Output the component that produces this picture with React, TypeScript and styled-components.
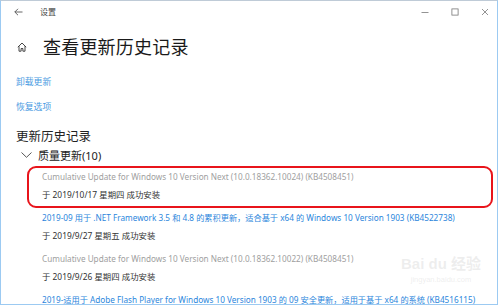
import React from "react";
import styled, { createGlobalStyle } from "styled-components";

const Global = createGlobalStyle`
  html, body { margin: 0; padding: 0; background: #fff; }
  body { width: 500px; height: 307px; overflow: hidden; }
  * { box-sizing: border-box; }
`;

const FONT = `"Noto Sans", "Noto Sans CJK SC", sans-serif`;

const Window = styled.div`
  width: 498px;
  height: 305px;
  border: 1px solid #9ccaf2;
  border-top-color: #bfcbd7;
  overflow: hidden;
  position: relative;
  font-family: ${FONT};
  color: #222;
  background: #fff;
`;

const TitleBar = styled.div`
  height: 21px;
  display: flex;
  align-items: center;
  padding-left: 11px;
`;

const BackButton = styled.div`
  width: 12px;
  height: 12px;
  display: flex;
  align-items: center;
  justify-content: center;
`;

const TitleText = styled.span`
  margin-left: 16px;
  font-size: 8px;
  color: #444;
  line-height: 1;
`;

const Controls = styled.div`
  margin-left: auto;
  display: flex;
  align-items: center;
  gap: 6px;
  height: 100%;
`;

const ControlButton = styled.div`
  width: 24px;
  height: 100%;
  display: flex;
  align-items: center;
  justify-content: center;
`;

const Header = styled.div`
  margin-top: 11px;
  height: 28px;
  display: flex;
  align-items: center;
  padding-left: 16px;
`;

const Heading = styled.h1`
  margin: 0 0 0 16px;
  font-size: 18px;
  font-weight: 400;
  line-height: 28px;
  color: #1a1a1a;
  letter-spacing: 0.2px;
`;

const Link = styled.div<{ $top: number }>`
  margin-top: ${(p) => p.$top}px;
  padding-left: 15px;
  font-size: 8.8px;
  line-height: 14px;
  color: #4a9be2;
`;

const SectionTitle = styled.div`
  margin-top: 14px;
  padding-left: 15px;
  font-size: 12.5px;
  line-height: 18px;
  color: #222;
`;

const Group = styled.div`
  margin-top: 2px;
  display: flex;
  align-items: center;
  padding-left: 20px;
  height: 14px;
  font-size: 11px;
  color: #222;
`;

const GroupLabel = styled.span`
  margin-left: 6px;
`;

const List = styled.div`
  margin-top: 8px;
  padding-left: 41px;
  display: flex;
  flex-direction: column;
  gap: 9px;
`;

const Entry = styled.div<{ $highlight?: boolean }>`
  position: relative;
  display: flex;
  flex-direction: column;
  gap: 4px;
  white-space: nowrap;
  ${(p) =>
    p.$highlight
      ? `&::after {
    content: "";
    position: absolute;
    left: -15px;
    top: -4px;
    width: 462px;
    height: 38px;
    border: 2.8px solid #e8141b;
    border-radius: 9px;
    pointer-events: none;
  }`
      : ""}
`;

const EntryTitle = styled.div<{ $link?: boolean }>`
  font-size: 8.2px;
  line-height: 14px;
  color: ${(p) => (p.$link ? "#2b86dc" : "#a0a0a0")};
`;

const EntryDate = styled.div`
  font-size: 8.4px;
  line-height: 14px;
  color: #333;
`;

const Watermark = styled.div`
  position: absolute;
  left: 400px;
  top: 252px;
  display: flex;
  flex-direction: column;
  align-items: center;
  white-space: nowrap;
  color: rgba(205, 205, 205, 0.35);
  font-family: "Liberation Sans", "Noto Sans CJK SC", sans-serif;
  pointer-events: none;
`;

const WatermarkMain = styled.div`
  font-size: 15px;
  font-weight: 700;
  line-height: 22px;
`;

const WatermarkSub = styled.div`
  font-size: 7.5px;
  line-height: 10px;
`;

const entries = [
  {
    title:
      "Cumulative Update for Windows 10 Version Next (10.0.18362.10024) (KB4508451)",
    date: "于 2019/10/17 星期四 成功安装",
    link: false,
    highlight: true,
  },
  {
    title:
      "2019-09 用于 .NET Framework 3.5 和 4.8 的累积更新，适合基于 x64 的 Windows 10 Version 1903 (KB4522738)",
    date: "于 2019/9/27 星期五 成功安装",
    link: true,
  },
  {
    title:
      "Cumulative Update for Windows 10 Version Next (10.0.18362.10022) (KB4508451)",
    date: "于 2019/9/26 星期四 成功安装",
    link: false,
  },
  {
    title:
      "2019-适用于 Adobe Flash Player for Windows 10 Version 1903 的 09 安全更新，适用于基于 x64 的系统 (KB4516115)",
    date: "",
    link: true,
  },
];

export default function App() {
  return (
    <>
      <Global />
      <Window>
        <TitleBar>
          <BackButton>
            <svg width="9" height="8" viewBox="0 0 9 8" fill="none" stroke="#555" strokeWidth="0.9">
              <path d="M8.5 4H0.8M4 0.8L0.8 4L4 7.2" />
            </svg>
          </BackButton>
          <TitleText>设置</TitleText>
          <Controls>
            <ControlButton>
              <svg width="8" height="8" viewBox="0 0 8 8" stroke="#777" strokeWidth="0.8">
                <path d="M0.5 4.5H7.5" />
              </svg>
            </ControlButton>
            <ControlButton>
              <svg width="8" height="8" viewBox="0 0 8 8" fill="none" stroke="#777" strokeWidth="0.8">
                <rect x="0.9" y="0.9" width="6.2" height="6.2" />
              </svg>
            </ControlButton>
            <ControlButton>
              <svg width="8" height="8" viewBox="0 0 8 8" stroke="#777" strokeWidth="0.8">
                <path d="M1 1L7 7M7 1L1 7" />
              </svg>
            </ControlButton>
          </Controls>
        </TitleBar>
        <Header>
          <svg width="10" height="10" viewBox="0 0 10 10" fill="none" stroke="#333" strokeWidth="0.9">
            <path d="M0.8 5.2L5 1L9.2 5.2M2 4.2V9.2H4.1V6.5H5.9V9.2H8V4.2" />
          </svg>
          <Heading>查看更新历史记录</Heading>
        </Header>
        <Link $top={14}>卸载更新</Link>
        <Link $top={11}>恢复选项</Link>
        <SectionTitle>更新历史记录</SectionTitle>
        <Group>
          <svg width="11" height="6" viewBox="0 0 11 6" fill="none" stroke="#444" strokeWidth="0.9">
            <path d="M0.5 0.5L5.5 5.3L10.5 0.5" />
          </svg>
          <GroupLabel>质量更新(10)</GroupLabel>
        </Group>
        <List>
          {entries.map((e, i) => (
            <Entry key={i} $highlight={e.highlight}>
              <EntryTitle $link={e.link}>{e.title}</EntryTitle>
              {e.date && <EntryDate>{e.date}</EntryDate>}
            </Entry>
          ))}
        </List>
        <Watermark>
          <WatermarkMain>Bai du 经验</WatermarkMain>
          <WatermarkSub>jingyan.baidu.com</WatermarkSub>
        </Watermark>
      </Window>
    </>
  );
}
